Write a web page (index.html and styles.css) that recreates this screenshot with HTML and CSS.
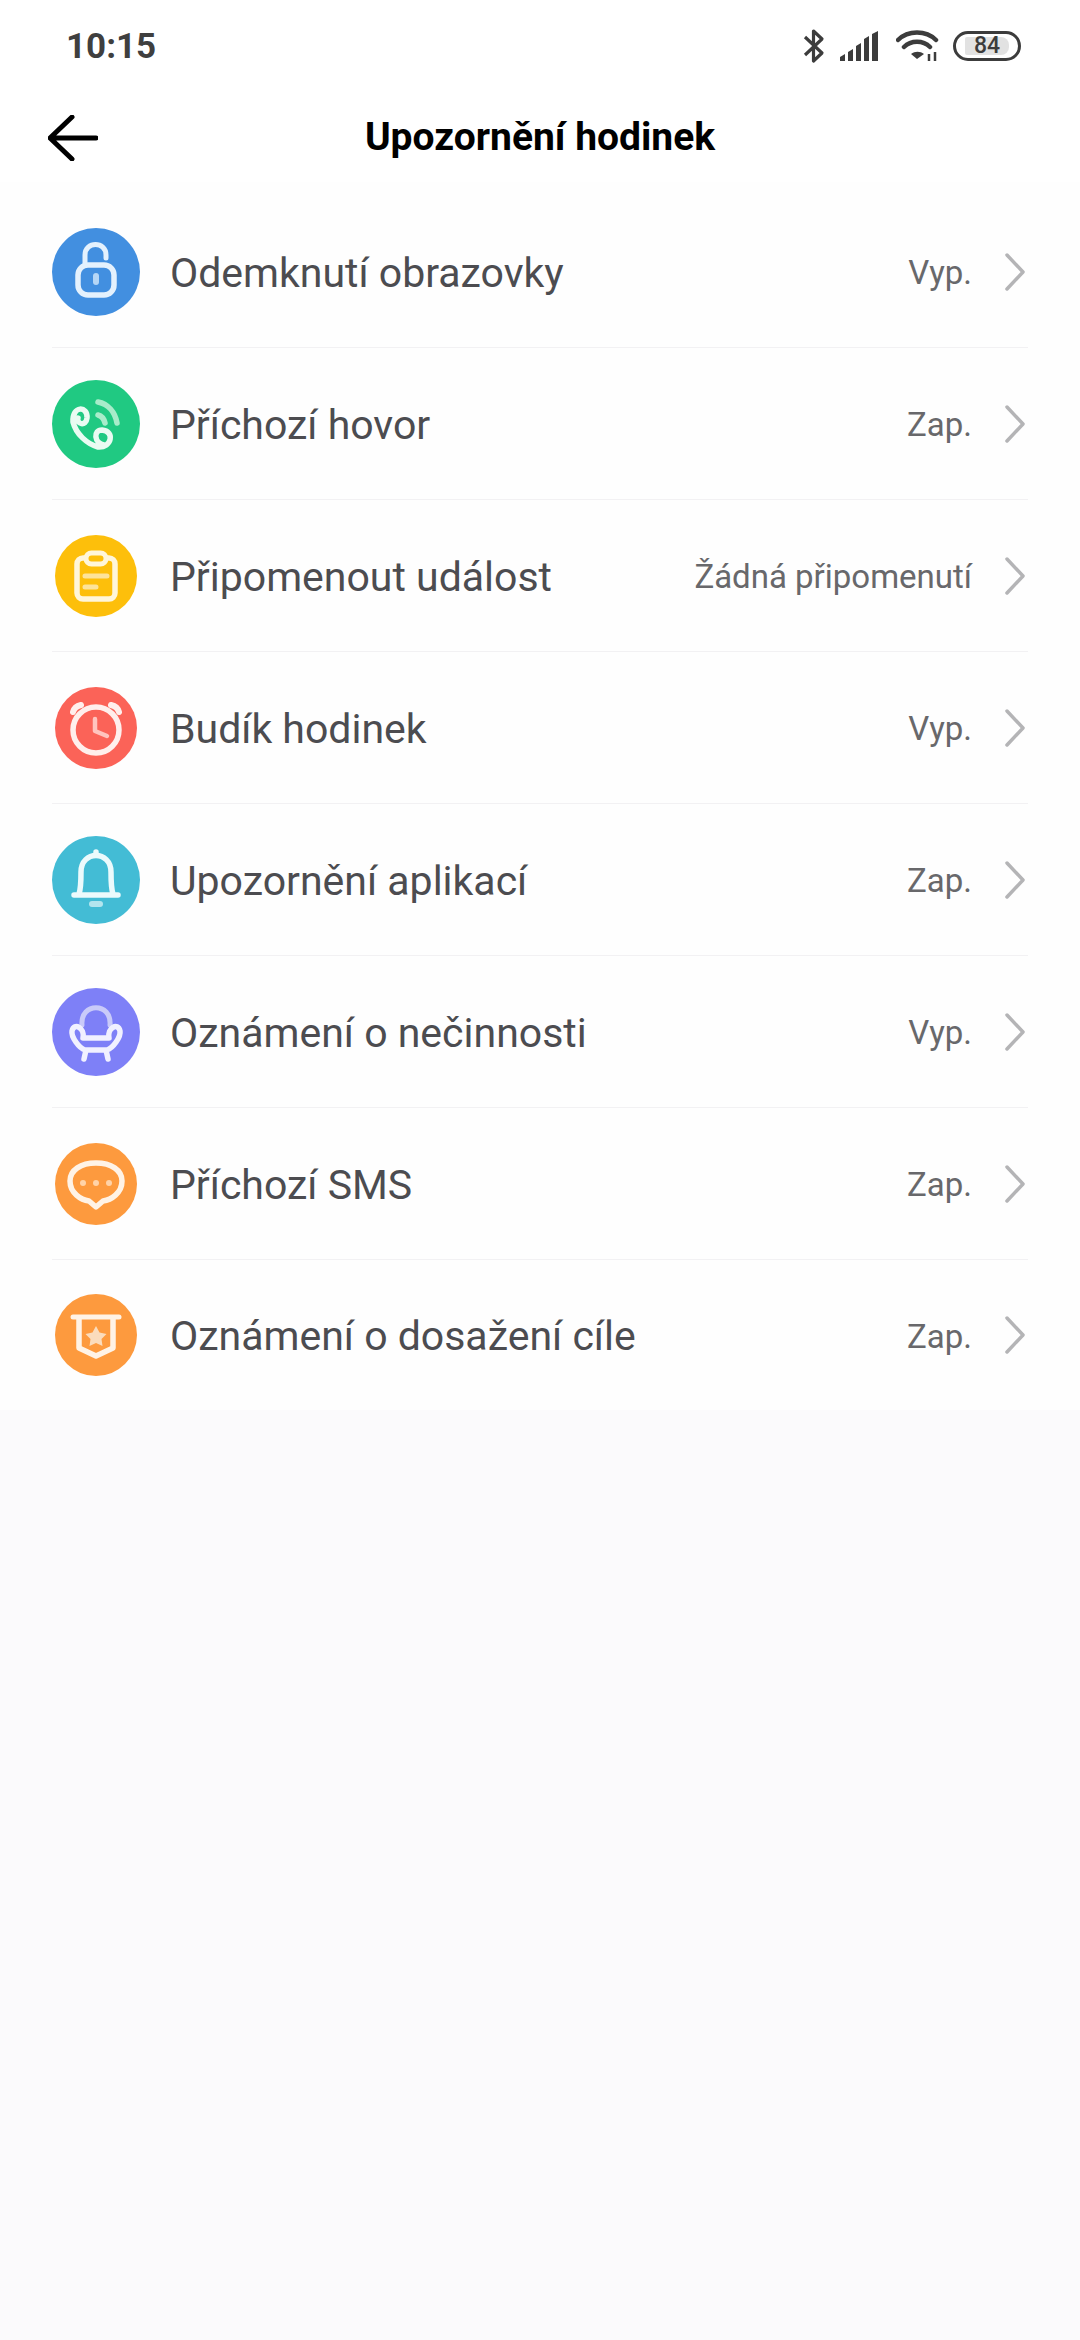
FILE: index.html
```html
<!DOCTYPE html>
<html lang="cs">
<head>
    <meta charset="UTF-8">
    <title>Upozornění hodinek</title>
    <link rel="stylesheet" href="styles.css">
</head>
<body>
    <!-- Status bar -->
    <div class="status-bar">
        <span class="time">10:15</span>
        <div class="status-icons">
            <svg class="ic-bt" width="22" height="36" viewBox="0 0 22 36"><path d="M2 9 19 25 10.500 33V3L19 11 2 27" fill="none" stroke="#3c3c3c" stroke-width="3.200" stroke-linejoin="round"/></svg>
            <svg class="ic-signal" width="40" height="30" viewBox="0 0 40 30"><path d="M0 30v-4l5-3v7zM8 30v-9l5-3v12zM16 30V15l5-3v18zM24 30V8l5-3v25zM32 30V3l6-3v30z" fill="#3c3c3c"/></svg>
            <svg class="ic-wifi" width="44" height="32" viewBox="0 0 44 32">
                <path d="M2 10C12 0 30 0 40 10M8 17C15 10 27 10 34 17" fill="none" stroke="#3c3c3c" stroke-width="4.500" stroke-linecap="round"/>
                <path d="M15 23C19 20 24 20 28 23L21 28Z" fill="#3c3c3c" transform="translate(0 1)"/>
                <path d="M33 24v7M39 22v9" stroke="#3c3c3c" stroke-width="2.500"/>
            </svg>
            <div class="battery"><span class="battery-fill">84</span></div>
        </div>
    </div>

    <!-- Nav -->
    <div class="nav">
        <svg class="back" width="50" height="46" viewBox="0 0 50 46"><path d="M48 23H3M24 2 2 23 24 44" fill="none" stroke="#000" stroke-width="5" stroke-linecap="round" stroke-linejoin="round"/></svg>
        <h1>Upozornění hodinek</h1>
    </div>

    <!-- Settings list -->
    <div class="list">
        <div class="row">
            <svg class="icon" viewBox="0 0 88 88"><circle cx="44" cy="44" r="44" fill="#428fe0"/>
                <path d="M33 37V27C33 13 54 13 54 27V30" fill="none" stroke="#e4f1fd" stroke-width="5" stroke-linecap="round"/>
                <rect x="26" y="37" width="36" height="30" rx="10" fill="none" stroke="#e4f1fd" stroke-width="5.500"/>
                <rect x="41" y="45" width="6" height="12" rx="3" fill="#b5d6f6"/></svg>
            <span class="label">Odemknutí obrazovky</span>
            <span class="value">Vyp.</span>
            <svg class="chevron" width="20" height="38" viewBox="0 0 20 38"><path d="M2 2 18 19 2 36" fill="none" stroke="#b4b4b6" stroke-width="3.500" stroke-linecap="round" stroke-linejoin="round"/></svg>
        </div>
        <div class="row">
            <svg class="icon" viewBox="0 0 88 88"><circle cx="44" cy="44" r="44" fill="#20c982"/>
                <path d="M21 42C20 25 36 26 35 38C34 47 24 44 26 38M21 42C24 54 35 64 46 67C60 68 63 51 50 50C41 50 42 63 52 65" fill="none" stroke="#eafbf2" stroke-width="5.500" stroke-linecap="round"/>
                <path d="M46 22C56 24 63 32 65 43M46 35C50 36 52 39 53 43" fill="none" stroke="#a8ecca" stroke-width="5.500" stroke-linecap="round"/></svg>
            <span class="label">Příchozí hovor</span>
            <span class="value">Zap.</span>
            <svg class="chevron" width="20" height="38" viewBox="0 0 20 38"><path d="M2 2 18 19 2 36" fill="none" stroke="#b4b4b6" stroke-width="3.500" stroke-linecap="round" stroke-linejoin="round"/></svg>
        </div>
        <div class="row">
            <svg class="icon" viewBox="0 0 88 88"><circle cx="44" cy="44" r="41" fill="#fdbf0b"/>
                <rect x="25" y="26" width="38" height="41" rx="6" fill="none" stroke="#fff6da" stroke-width="5.500"/>
                <rect x="34" y="21" width="20" height="11" rx="5.500" fill="#fdbf0b" stroke="#fff6da" stroke-width="5"/>
                <path d="M33 44H55M33 55H44" stroke="#fde39a" stroke-width="5" stroke-linecap="round"/></svg>
            <span class="label">Připomenout událost</span>
            <span class="value">Žádná připomenutí</span>
            <svg class="chevron" width="20" height="38" viewBox="0 0 20 38"><path d="M2 2 18 19 2 36" fill="none" stroke="#b4b4b6" stroke-width="3.500" stroke-linecap="round" stroke-linejoin="round"/></svg>
        </div>
        <div class="row">
            <svg class="icon" viewBox="0 0 88 88"><circle cx="44" cy="44" r="41" fill="#fb6358"/>
                <circle cx="44" cy="46" r="23" fill="none" stroke="#ffefec" stroke-width="5.500"/>
                <path d="M43 35V47L55 52" fill="none" stroke="#ffc4be" stroke-width="4.500" stroke-linecap="round" stroke-linejoin="round"/>
                <path d="M21 28C22 24 25 22 29 21M67 28C66 24 63 22 59 21" fill="none" stroke="#ffefec" stroke-width="6" stroke-linecap="round"/></svg>
            <span class="label">Budík hodinek</span>
            <span class="value">Vyp.</span>
            <svg class="chevron" width="20" height="38" viewBox="0 0 20 38"><path d="M2 2 18 19 2 36" fill="none" stroke="#b4b4b6" stroke-width="3.500" stroke-linecap="round" stroke-linejoin="round"/></svg>
        </div>
        <div class="row">
            <svg class="icon" viewBox="0 0 88 88"><circle cx="44" cy="44" r="44" fill="#43bcd5"/>
                <path d="M22 59H66M27 58C29 52 29 46 29 36C29 14 59 14 59 36C59 46 59 52 61 58M44 19V16" fill="none" stroke="#ecfafc" stroke-width="5.500" stroke-linecap="round"/>
                <path d="M40 68H48" stroke="#b3e5ee" stroke-width="6" stroke-linecap="round"/></svg>
            <span class="label">Upozornění aplikací</span>
            <span class="value">Zap.</span>
            <svg class="chevron" width="20" height="38" viewBox="0 0 20 38"><path d="M2 2 18 19 2 36" fill="none" stroke="#b4b4b6" stroke-width="3.500" stroke-linecap="round" stroke-linejoin="round"/></svg>
        </div>
        <div class="row">
            <svg class="icon" viewBox="0 0 88 88"><circle cx="44" cy="44" r="44" fill="#7e80f7"/>
                <path d="M30 37C28 14 60 14 58 37" fill="none" stroke="#c9caf9" stroke-width="5" stroke-linecap="round"/>
                <path d="M31 50H57M31 50C33 40 22 34 20 43C19 49 27 60 33 62H55C61 60 69 49 68 43C66 34 55 40 57 50M34 62 32 71M54 62 56 71" fill="none" stroke="#f1f1ff" stroke-width="5.500" stroke-linecap="round" stroke-linejoin="round"/></svg>
            <span class="label">Oznámení o nečinnosti</span>
            <span class="value">Vyp.</span>
            <svg class="chevron" width="20" height="38" viewBox="0 0 20 38"><path d="M2 2 18 19 2 36" fill="none" stroke="#b4b4b6" stroke-width="3.500" stroke-linecap="round" stroke-linejoin="round"/></svg>
        </div>
        <div class="row">
            <svg class="icon" viewBox="0 0 88 88"><circle cx="44" cy="44" r="41" fill="#fd9a3e"/>
                <path d="M44 23C29 23 18 30 18 41C18 53 29 60 37 61L44 67 51 61C59 60 70 53 70 41C70 30 59 23 44 23Z" fill="none" stroke="#fff3e6" stroke-width="5.500" stroke-linejoin="round"/>
                <circle cx="31" cy="43" r="3" fill="#ffd3a8"/><circle cx="44" cy="43" r="3" fill="#ffd3a8"/><circle cx="57" cy="43" r="3" fill="#ffd3a8"/></svg>
            <span class="label">Příchozí SMS</span>
            <span class="value">Zap.</span>
            <svg class="chevron" width="20" height="38" viewBox="0 0 20 38"><path d="M2 2 18 19 2 36" fill="none" stroke="#b4b4b6" stroke-width="3.500" stroke-linecap="round" stroke-linejoin="round"/></svg>
        </div>
        <div class="row">
            <svg class="icon" viewBox="0 0 88 88"><circle cx="44" cy="44" r="41" fill="#fd9a3e"/>
                <path d="M21 26H67" stroke="#fff3e6" stroke-width="5" stroke-linecap="round"/>
                <path d="M27 27V57L44 65 61 57V27" fill="none" stroke="#fff3e6" stroke-width="5.500" stroke-linejoin="round"/>
                <path d="M44 35 47.500 41.500 54.500 43 49.500 48 50.500 55 44 52 37.500 55 38.500 48 33.500 43 40.500 41.500Z" fill="#fbdcbc"/></svg>
            <span class="label">Oznámení o dosažení cíle</span>
            <span class="value">Zap.</span>
            <svg class="chevron" width="20" height="38" viewBox="0 0 20 38"><path d="M2 2 18 19 2 36" fill="none" stroke="#b4b4b6" stroke-width="3.500" stroke-linecap="round" stroke-linejoin="round"/></svg>
        </div>
    </div>
</body>
</html>
```

FILE: styles.css
```css
body {
    font-family: Roboto, "Liberation Sans", sans-serif;
    margin: 0;
    padding: 0;
    width: 1080px;
    height: 2340px;
    overflow: hidden;
    background-color: #fbfafc;
}
.status-bar {
    display: flex;
    justify-content: space-between;
    align-items: center;
    height: 92px;
    padding: 0 59px 0 66px;
    box-sizing: border-box;
    background-color: #fff;
}
.time {
    font-size: 35px;
    font-weight: 700;
    color: #3f3f3f;
}
.status-icons {
    display: flex;
    align-items: center;
    gap: 15px;
}
.ic-signal {
    margin-right: 1px;
}
.ic-wifi {
    margin-right: -2px;
}
.battery {
    display: flex;
    align-items: center;
    justify-content: center;
    width: 68px;
    height: 30px;
    box-sizing: border-box;
    border: 3px solid #3c3c3c;
    border-radius: 15px;
}
.battery-fill {
    width: 44px;
    height: 18px;
    background-color: #e2e2e2;
    border-radius: 2px 8px 8px 2px;
    font-size: 23px;
    font-weight: 500;
    line-height: 18px;
    text-align: center;
    color: #3c3c3c;
}
.nav {
    display: flex;
    align-items: center;
    justify-content: center;
    position: relative;
    height: 90px;
    background-color: #fff;
}
.back {
    position: absolute;
    left: 48px;
    top: 23px;
}
.nav h1 {
    margin: 0;
    font-size: 39px;
    font-weight: 700;
    color: #000;
}
.list {
    padding: 14px 52px 0;
    background-color: #fefefe;
}
.row {
    display: flex;
    align-items: center;
    height: 152px;
    box-sizing: border-box;
    border-bottom: 1px solid #f2f1f3;
}
.row:last-child {
    height: 150px;
    border-bottom: none;
}
.icon {
    width: 88px;
    height: 88px;
    flex-shrink: 0;
}
.label {
    flex: 1;
    margin-left: 30px;
    padding-top: 2px;
    font-size: 41px;
    color: #4c4c50;
}
.value {
    padding-top: 2px;
    font-size: 33px;
    color: #68686b;
}
.chevron {
    margin: 0 3px 0 33px;
}
```
